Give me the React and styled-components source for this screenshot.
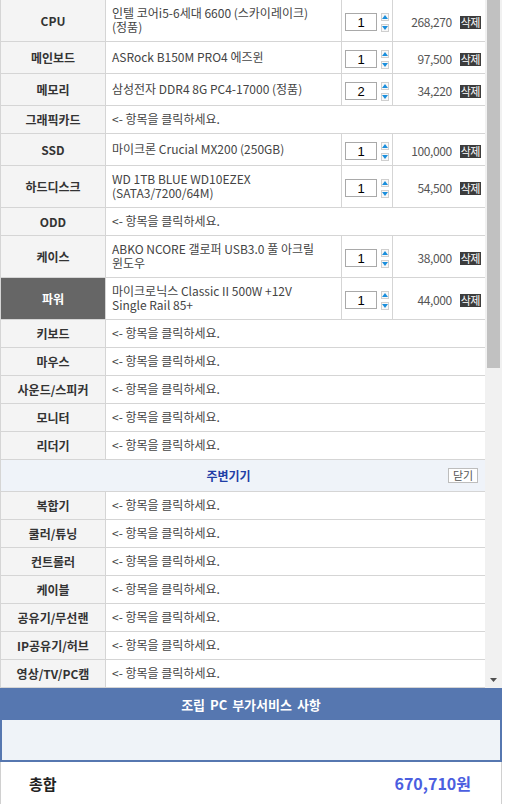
import React from "react";
import styled, { createGlobalStyle } from "styled-components";

const GlobalStyle = createGlobalStyle`
  html, body {
    margin: 0;
    padding: 0;
    background: #fff;
    overflow: hidden;
  }
  body {
    font-family: "Noto Sans CJK KR", "Noto Sans", sans-serif;
    font-size: 12px;
    color: #333;
  }
`;

const Wrap = styled.div`
  width: 502px;
`;

const ScrollArea = styled.div`
  display: flex;
  height: 688px;
  overflow: hidden;
`;

const Table = styled.div`
  width: 485px;
  flex: none;
  border-left: 1px solid #d5d5d5;
  box-sizing: border-box;
`;

const Row = styled.div`
  display: flex;
  border-bottom: 1px solid #d5d5d5;
`;

const Label = styled.div`
  width: 104px;
  flex: none;
  display: flex;
  align-items: center;
  justify-content: center;
  border-right: 1px solid #d5d5d5;
  background: ${(p) => (p.$selected ? "#666666" : "#f4f4f4")};
  color: ${(p) => (p.$selected ? "#ffffff" : "#333333")};
  font-weight: 700;
  font-size: 12px;
  white-space: nowrap;
`;

const Name = styled.div`
  flex: 1;
  min-width: 0;
  padding: 6px 6px 7px;
  line-height: 14px;
  white-space: pre-line;
  color: #444;
  display: flex;
  align-items: center;
`;

const Qty = styled.div`
  width: 51px;
  flex: none;
  min-height: 31px;
  border-left: 1px solid #d5d5d5;
  display: flex;
  align-items: center;
  padding: 3px 0 0 3px;
  box-sizing: border-box;
  gap: 4px;
`;

const QtyInput = styled.input`
  width: 32px;
  height: 18px;
  box-sizing: border-box;
  border: 1px solid #a9a9a9;
  padding: 0;
  text-align: center;
  font-family: "Liberation Sans", sans-serif;
  font-size: 13px;
  color: #000;
  background: #fff;
  outline: none;
`;

const Spinner = styled.div`
  display: flex;
  flex-direction: column;
  gap: 3px;
`;

const SpinBtn = styled.div`
  width: 8px;
  height: 8px;
  box-sizing: border-box;
  border: 1px solid #cfcfcf;
  background: #f8f8f8;
  display: flex;
  align-items: center;
  justify-content: center;
`;

const Price = styled.div`
  width: 93px;
  flex: none;
  border-left: 1px solid #d5d5d5;
  display: flex;
  align-items: center;
  justify-content: flex-end;
  padding: 1px 4px 0 0;
  box-sizing: border-box;
  gap: 8px;
  color: #555;
  letter-spacing: -0.4px;
`;

const DeleteBtn = styled.span`
  background: #3c3c3c;
  color: #fff;
  font-size: 11px;
  line-height: 13px;
  padding: 0 1px;
  margin-top: 2px;
  letter-spacing: -0.5px;
`;

const GroupHead = styled.div`
  display: flex;
  align-items: center;
  height: 31px;
  background: #eff3f9;
  border-bottom: 1px solid #d5d5d5;
`;

const GroupTitle = styled.div`
  flex: 1;
  text-align: center;
  padding-left: 8px;
  font-weight: 700;
  color: #1f3ea6;
`;

const CloseBtn = styled.span`
  margin-right: 7px;
  width: 30px;
  height: 15px;
  box-sizing: border-box;
  border: 1px solid #bdbdbd;
  background: #fff;
  color: #555;
  font-size: 11px;
  line-height: 13px;
  text-align: center;
`;

const ScrollBar = styled.div`
  width: 17px;
  flex: none;
  background: #f1f1f1;
  display: flex;
  flex-direction: column;
`;

const Thumb = styled.div`
  height: 368px;
  margin: 0 2px;
  background: #c1c1c1;
`;

const ArrowBox = styled.div`
  margin-top: auto;
  height: 17px;
  display: flex;
  align-items: center;
  justify-content: center;
`;

const ServiceHead = styled.div`
  height: 32px;
  background: #5677b0;
  color: #fff;
  font-weight: 700;
  font-size: 13px;
  display: flex;
  align-items: center;
  justify-content: center;
  word-spacing: 2px;
`;

const ServiceBox = styled.div`
  height: 42px;
  box-sizing: border-box;
  background: #eff3f8;
  border: 2px solid #5677b0;
  border-top: none;
`;

const Total = styled.div`
  height: 42px;
  display: flex;
  align-items: center;
  justify-content: space-between;
  padding: 0 30px 0 28px;
  border-left: 1px solid #d0d0d0;
  border-right: 1px solid #d0d0d0;
`;

const TotalLabel = styled.span`
  font-size: 15px;
  font-weight: 700;
  color: #222;
`;

const TotalValue = styled.span`
  font-size: 16px;
  font-weight: 700;
  color: #4b5ee0;
`;

const EMPTY = "<- 항목을 클릭하세요.";

const parts = [
  { label: "CPU", name: "인텔 코어i5-6세대 6600 (스카이레이크)\n(정품)", qty: 1, price: "268,270" },
  { label: "메인보드", name: "ASRock B150M PRO4 에즈윈", qty: 1, price: "97,500" },
  { label: "메모리", name: "삼성전자 DDR4 8G PC4-17000 (정품)", qty: 2, price: "34,220" },
  { label: "그래픽카드" },
  { label: "SSD", name: "마이크론 Crucial MX200 (250GB)", qty: 1, price: "100,000" },
  { label: "하드디스크", name: "WD 1TB BLUE WD10EZEX\n(SATA3/7200/64M)", qty: 1, price: "54,500" },
  { label: "ODD" },
  { label: "케이스", name: "ABKO NCORE 갤로퍼 USB3.0 풀 아크릴\n윈도우", qty: 1, price: "38,000" },
  { label: "파워", name: "마이크로닉스 Classic II 500W +12V\nSingle Rail 85+", qty: 1, price: "44,000", selected: true },
  { label: "키보드" },
  { label: "마우스" },
  { label: "사운드/스피커" },
  { label: "모니터" },
  { label: "리더기" },
];

const extras = [
  "복합기",
  "쿨러/튜닝",
  "컨트롤러",
  "케이블",
  "공유기/무선랜",
  "IP공유기/허브",
  "영상/TV/PC캠",
];

function Arrow({ up }) {
  return (
    <svg width="6" height="4" viewBox="0 0 6 4">
      <path d={up ? "M0 4 L3 0 L6 4 Z" : "M0 0 L6 0 L3 4 Z"} fill="#1a8edc" />
    </svg>
  );
}

function PartRow({ part }) {
  return (
    <Row>
      <Label $selected={part.selected}>{part.label}</Label>
      <Name>{part.name || EMPTY}</Name>
      {part.price && (
        <>
          <Qty>
            <QtyInput defaultValue={part.qty} readOnly />
            <Spinner>
              <SpinBtn>
                <Arrow up />
              </SpinBtn>
              <SpinBtn>
                <Arrow />
              </SpinBtn>
            </Spinner>
          </Qty>
          <Price>
            {part.price}
            <DeleteBtn>삭제</DeleteBtn>
          </Price>
        </>
      )}
    </Row>
  );
}

export default function App() {
  return (
    <Wrap>
      <GlobalStyle />
      <ScrollArea>
        <Table>
          {parts.map((p) => (
            <PartRow key={p.label} part={p} />
          ))}
          <GroupHead>
            <GroupTitle>주변기기</GroupTitle>
            <CloseBtn>닫기</CloseBtn>
          </GroupHead>
          {extras.map((label) => (
            <PartRow key={label} part={{ label }} />
          ))}
        </Table>
        <ScrollBar>
          <Thumb />
          <ArrowBox>
            <svg width="7" height="4" viewBox="0 0 7 4">
              <path d="M0 0 L7 0 L3.5 4 Z" fill="#505050" />
            </svg>
          </ArrowBox>
        </ScrollBar>
      </ScrollArea>
      <ServiceHead>조립 PC 부가서비스 사항</ServiceHead>
      <ServiceBox />
      <Total>
        <TotalLabel>총합</TotalLabel>
        <TotalValue>670,710원</TotalValue>
      </Total>
    </Wrap>
  );
}
